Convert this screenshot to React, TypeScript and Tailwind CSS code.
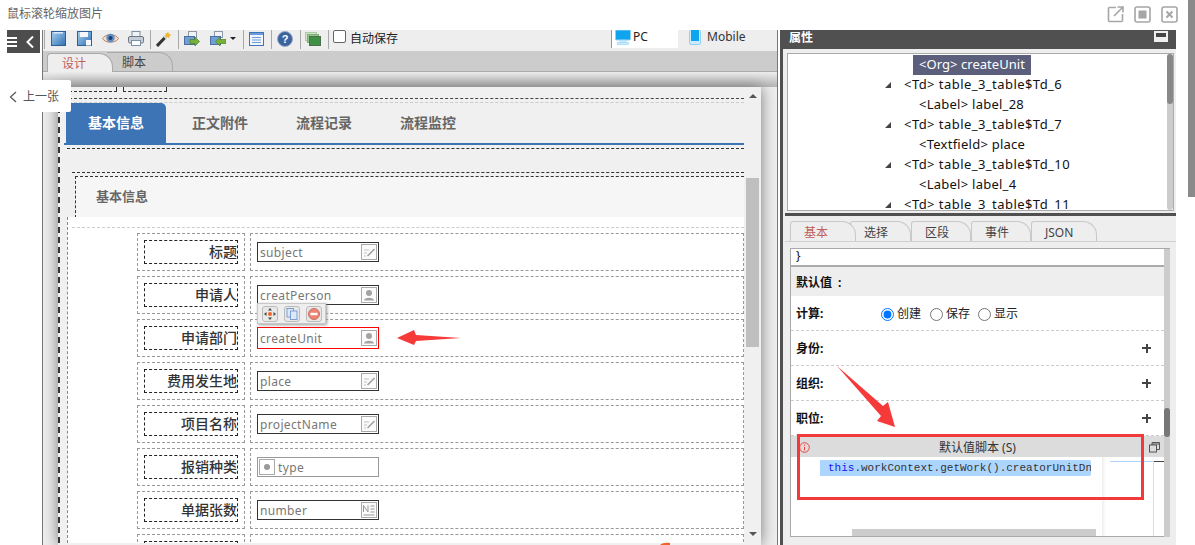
import React from "react";

const FONT = '"Noto Sans", "Noto Sans CJK SC", sans-serif';

function Sep() {
  return <span className="self-start w-px h-[19px] bg-[#a8a8a8] shrink-0" />;
}

function FloppyBlue({ sheet }: { sheet?: boolean }) {
  return (
    <svg width="15" height="15" viewBox="0 0 15 15">
      <defs>
        <linearGradient id="fb" x1="0" y1="0" x2="1" y2="1">
          <stop offset="0" stopColor="#a9d3f2" />
          <stop offset="1" stopColor="#2f6fb0" />
        </linearGradient>
      </defs>
      <rect x="0.5" y="0.5" width="14" height="14" fill="url(#fb)" stroke="#2a5f98" />
      {sheet ? (
        <>
          <rect x="3" y="1" width="8" height="5" fill="#f4f8fc" />
          <rect x="9" y="9" width="5" height="5.5" fill="#f4f8fc" />
        </>
      ) : (
        <rect x="3" y="1" width="9" height="1.5" fill="#dbeafa" />
      )}
    </svg>
  );
}

function Eye() {
  return (
    <svg width="17" height="13" viewBox="0 0 17 13">
      <path d="M0.5 6.5C3 1.5 14 1.5 16.5 6.5C14 11.5 3 11.5 0.5 6.5Z" fill="#f5dcc4" stroke="#b98a66" />
      <circle cx="8.5" cy="6" r="4.2" fill="#5d8fc9" />
      <circle cx="8.5" cy="6" r="2" fill="#1f3e72" />
    </svg>
  );
}

function Printer() {
  return (
    <svg width="16" height="15" viewBox="0 0 16 15">
      <rect x="4" y="0.5" width="8" height="6" fill="#eef3f8" stroke="#7f8fa3" />
      <rect x="0.5" y="5.5" width="15" height="6.5" rx="1.5" fill="#c4ccd6" stroke="#6c7683" />
      <rect x="3.5" y="9.5" width="9" height="5" fill="#fbfcfd" stroke="#7f8fa3" />
    </svg>
  );
}

function Wand() {
  return (
    <svg width="16" height="16" viewBox="0 0 16 16">
      <path d="M1 15L10 5.5" stroke="#333" strokeWidth="3" />
      <path d="M8.6 7L10 5.5" stroke="#ddd" strokeWidth="3" />
      <path d="M12 0.5L13 3L15.5 3.8L13.3 5.2L13.3 7.5L11.4 6L9.2 6.6L10 4.4L8.8 2.5L11 2.6Z" fill="#f0b428" />
    </svg>
  );
}

function ImportIcon({ left }: { left?: boolean }) {
  return (
    <svg width="16" height="16" viewBox="0 0 16 16">
      <rect x="4.5" y="0.5" width="8" height="6" fill="#f0f3f7" stroke="#8c97a6" />
      <rect x="0.5" y="5.5" width="10" height="8" fill="#6f9fd6" stroke="#4c6f9e" />
      {left ? (
        <path d="M16 8.5H10V6L5.5 10.5L10 15V12.5H16Z" fill="#74b23a" stroke="#4d7f22" strokeWidth="0.7" />
      ) : (
        <path d="M6 8.5H11V6L15.5 10.5L11 15V12.5H6Z" fill="#74b23a" stroke="#4d7f22" strokeWidth="0.7" />
      )}
    </svg>
  );
}

function ListIcon() {
  return (
    <svg width="15" height="14" viewBox="0 0 15 14">
      <rect x="0.5" y="0.5" width="14" height="13" fill="#f2f6fc" stroke="#3f74ba" />
      <rect x="1" y="1" width="13" height="2" fill="#6b9bd8" />
      <path d="M3 5.5H12M3 8H12M3 10.5H12" stroke="#6b9bd8" />
    </svg>
  );
}

function HelpIcon() {
  return (
    <svg width="16" height="16" viewBox="0 0 16 16">
      <circle cx="8" cy="8" r="7.5" fill="#3c62a0" stroke="#9aa9c2" />
      <text x="8" y="12" textAnchor="middle" fill="#fff" fontSize="11" fontWeight="700" fontFamily="Liberation Sans, sans-serif">?</text>
    </svg>
  );
}

function LayersIcon() {
  return (
    <svg width="16" height="14" viewBox="0 0 16 14">
      <rect x="0.5" y="0.5" width="11" height="8" fill="#cfe6c8" stroke="#a8cca0" />
      <rect x="2.5" y="2.5" width="11" height="8" fill="#94c48a" stroke="#7fae76" />
      <rect x="4.5" y="4.5" width="11" height="9" fill="#3f8f45" stroke="#4d6f50" />
    </svg>
  );
}

function Toolbar() {
  return (
    <div className="h-[21px] bg-[#eeeeee] flex items-start relative">
      <div className="flex items-center h-[17px] pl-[1px]">
        <Sep />
        <span className="ml-[6px] w-[26px]"><FloppyBlue /></span>
        <span className="w-[25px]"><FloppyBlue sheet /></span>
        <span className="w-[26px]"><Eye /></span>
        <span className="w-[22px]"><Printer /></span>
        <Sep />
        <span className="ml-[5px] w-[22px]"><Wand /></span>
        <Sep />
        <span className="ml-[5px] w-[26px]"><ImportIcon /></span>
        <span className="flex items-center w-[33px]">
          <ImportIcon left />
          <span className="ml-[4px] w-0 h-0 border-x-[3px] border-x-transparent border-t-[3px] border-t-[#222]" />
        </span>
        <Sep />
        <span className="ml-[5px] w-[22px]"><ListIcon /></span>
        <Sep />
        <span className="ml-[5px] w-[23px]"><HelpIcon /></span>
        <Sep />
        <span className="ml-[4px] w-[23px]"><LayersIcon /></span>
        <Sep />
        <input type="checkbox" readOnly className="ml-[4px] w-[13px] h-[13px] mt-[-4px] appearance-none border border-[#666] rounded-[2px] bg-white" />
        <span className="ml-[4px] text-[12px] leading-[17px] text-[#222]">自动保存</span>
      </div>
      <div className="ml-[213px] flex h-[18px]">
        <div className="w-[67px] bg-white border-l border-[#999] flex items-start pl-[3px]">
          <svg width="16" height="15" viewBox="0 0 16 15">
            <rect x="0.5" y="0" width="15" height="10" rx="1" fill="#0ea5ee" stroke="#8fd2f5" />
            <rect x="5" y="10" width="6" height="2.5" fill="#cdeafa" stroke="#8fd2f5" strokeWidth="0.6" />
            <rect x="2.5" y="12.5" width="11" height="2" fill="#cdeafa" stroke="#8fd2f5" strokeWidth="0.6" />
          </svg>
          <span className="ml-[2px] text-[12px] leading-[14px] text-[#222]">PC</span>
        </div>
        <div className="flex items-start pl-[11px]">
          <svg width="12" height="15" viewBox="0 0 12 15">
            <rect x="0.5" y="0" width="11" height="14.5" rx="1.5" fill="#cdeafa" stroke="#8fd2f5" />
            <rect x="2" y="0" width="8" height="11" fill="#0ea5ee" />
          </svg>
          <span className="ml-[6px] text-[12px] leading-[13px] text-[#333]">Mobile</span>
        </div>
      </div>
    </div>
  );
}

function PencilIcon() {
  return (
    <svg width="16" height="16" viewBox="0 0 16 16">
      <rect x="0.5" y="0.5" width="15" height="15" fill="#fbfbfb" stroke="#aaa" />
      <path d="M3 6H8M3 9H6M3 12H5" stroke="#c0c0c0" />
      <path d="M6.5 12L13.5 5" stroke="#a0a0a0" strokeWidth="1.6" />
    </svg>
  );
}

function PersonIcon() {
  return (
    <svg width="16" height="16" viewBox="0 0 16 16">
      <rect x="0.5" y="0.5" width="15" height="15" fill="#fbfbfb" stroke="#aaa" />
      <circle cx="8" cy="6" r="3" fill="#a3a3a3" />
      <path d="M3 13.5C3 9.8 13 9.8 13 13.5Z" fill="#a3a3a3" />
    </svg>
  );
}

function NumberIcon() {
  return (
    <svg width="16" height="16" viewBox="0 0 16 16">
      <rect x="0.5" y="0.5" width="15" height="15" fill="#fbfbfb" stroke="#aaa" />
      <path d="M2.5 10V3.5L7 10V3.5" stroke="#999" fill="none" />
      <path d="M9.5 4H13.5M9.5 7H13.5M9.5 10H13.5M2.5 13H13.5" stroke="#999" />
    </svg>
  );
}

function Field({ label, name, kind, selected }: { label: string; name: string; kind: "pen" | "person" | "num" | "radio"; selected?: boolean }) {
  const tall = selected ? "h-[22px] border-[#f00]" : kind === "radio" ? "h-[20px] border-[#999]" : "h-[20px] border-[#333]";
  return (
    <div className="flex h-[38px] mb-[5px] shrink-0">
      <div className="w-[108px] h-full border border-dashed border-[#999] px-[6px] flex items-center">
        <div className="w-full h-[24px] border border-dashed border-[#222] text-right text-[14px] leading-[22px] font-medium text-[#333]">{label}</div>
      </div>
      <div className="ml-[5px] flex-1 h-full border border-dashed border-[#999] pl-[6px] pt-[8px]">
        <div className={`w-[122px] ${tall} border flex items-center bg-white ${selected ? "-mt-[1px]" : ""}`}>
          {kind === "radio" && (
            <span className="ml-[1px] w-[16px] h-[16px] border border-[#aaa] flex items-center justify-center mr-[3px]">
              <span className="w-[6px] h-[6px] rounded-full bg-[#999]" />
            </span>
          )}
          <span className={`text-[12px] tracking-[0.35px] text-[#777] pt-[1px] ${kind === "radio" ? "" : "pl-[2px]"}`}>{name}</span>
          {kind !== "radio" && (
            <span className="ml-auto mr-[1px]">
              {kind === "pen" ? <PencilIcon /> : kind === "person" ? <PersonIcon /> : <NumberIcon />}
            </span>
          )}
        </div>
      </div>
    </div>
  );
}

function FloatTools() {
  const Btn = ({ children }: { children: React.ReactNode }) => (
    <span className="w-[16px] h-[16px] rounded-[3px] border border-[#bbb] bg-[#e8e8e8] flex items-center justify-center">{children}</span>
  );
  return (
    <div className="absolute left-[257px] top-[303px] w-[69px] h-[21px] bg-[#eeeeee] border border-[#c8c8c8] shadow-[1px_1px_3px_#999] flex items-center gap-[6px] pl-[4px]">
      <Btn>
        <svg width="12" height="12" viewBox="0 0 12 12">
          <path d="M6 0L8 2.5H4ZM6 12L4 9.5H8ZM0 6L2.5 4V8ZM12 6L9.5 8V4Z" fill="#444" />
          <circle cx="6" cy="6" r="2" fill="#f0642a" />
        </svg>
      </Btn>
      <Btn>
        <svg width="12" height="12" viewBox="0 0 12 12">
          <rect x="1" y="0.5" width="6.5" height="8.5" fill="#dce9fa" stroke="#7d9fd0" />
          <rect x="4.5" y="3" width="6.5" height="8.5" fill="#dce9fa" stroke="#7d9fd0" />
        </svg>
      </Btn>
      <Btn>
        <svg width="12" height="12" viewBox="0 0 12 12">
          <circle cx="6" cy="6" r="5.5" fill="#ec8576" stroke="#d0705f" />
          <rect x="2.5" y="4.8" width="7" height="2.4" fill="#fff" />
        </svg>
      </Btn>
    </div>
  );
}

function DesignPanel() {
  return (
    <div className="flex-1 min-h-0 bg-[#eeeeee] pt-[15px] pl-[15px] overflow-hidden relative">
      <div className="absolute left-0 right-0 top-0 h-[15px] bg-gradient-to-b from-[#eeeeee] to-[#b4b4b4]" />
      <div className="relative w-[703px] h-[458px] bg-[#f0f0f0] shadow-[0_0_14px_#777] flex">
        <div className="w-[686px] h-[456px] flex flex-col border-l-2 border-dashed border-[#333]">
          <div className="h-[11px] flex pl-[9px] items-start shrink-0">
            <span className="w-[48px] h-[5px] border-b border-r border-dashed border-[#333]" />
            <span className="ml-[6px] w-[44px] h-[5px] border-b border-r border-l border-dashed border-[#333]" />
          </div>
          <div className="ml-[4px] border-t border-dashed border-[#444] h-[5px] shrink-0">
            <div className="mt-[3px] border-t border-dashed border-[#ccc]" />
          </div>
          <div className="ml-[4px] h-[40px] flex items-stretch pl-[2px] shrink-0 text-[14px] font-bold text-[#666]">
            <div className="w-[100px] bg-[#3d74b5] text-white rounded-tr-[5px] flex items-center justify-center pb-[2px]">基本信息</div>
            <div className="flex items-center pl-[26px] gap-[48px] pb-[2px]">
              <span>正文附件</span>
              <span>流程记录</span>
              <span>流程监控</span>
            </div>
          </div>
          <div className="ml-[4px] h-[2px] bg-[#3d74b5] shrink-0" />
          <div className="ml-[7px] mt-[3px] h-[24px] border-t border-dashed border-[#333] shrink-0" />
          <div className="ml-[12px] h-[45px] border-t border-dashed border-[#333] pt-[3px] shrink-0">
            <div className="ml-[3px] h-[42px] bg-[#f6f6f6] border-t border-l border-b border-dashed border-[#333] flex items-center pl-[20px] text-[13px] font-bold text-[#666]">
              基本信息
            </div>
          </div>
          <div className="ml-[7px] flex-1 min-h-0 overflow-hidden bg-white border-l border-dashed border-[#888]">
            <div className="ml-[4px] h-full pt-[10px] overflow-hidden">
              <div className="border-t border-dashed border-[#ccc] pt-[5px] pl-[65px] flex flex-col">
                <Field label="标题" name="subject" kind="pen" />
                <Field label="申请人" name="creatPerson" kind="person" />
                <Field label="申请部门" name="createUnit" kind="person" selected />
                <Field label="费用发生地" name="place" kind="pen" />
                <Field label="项目名称" name="projectName" kind="pen" />
                <Field label="报销种类" name="type" kind="radio" />
                <Field label="单据张数" name="number" kind="num" />
                <Field label="" name="" kind="radio" />
              </div>
            </div>
          </div>
        </div>
        <div className="ml-[2px] w-[13px] h-[456px] flex flex-col items-center">
          <span className="mt-[7px] w-0 h-0 border-x-[4px] border-x-transparent border-b-[4px] border-b-[#555]" />
          <div className="mt-[80px] w-[13px] h-[169px] bg-[#bfbfbf]" />
          <span className="mt-[185px] w-0 h-0 border-x-[4px] border-x-transparent border-t-[4px] border-t-[#555]" />
        </div>
      </div>
    </div>
  );
}

const treeRows: { text: string; level: number; sel?: boolean }[] = [
  { text: "<Org> createUnit", level: 2, sel: true },
  { text: "<Td> table_3_table$Td_6", level: 1 },
  { text: "<Label> label_28", level: 2 },
  { text: "<Td> table_3_table$Td_7", level: 1 },
  { text: "<Textfield> place", level: 2 },
  { text: "<Td> table_3_table$Td_10", level: 1 },
  { text: "<Label> label_4", level: 2 },
  { text: "<Td> table_3_table$Td_11", level: 1 },
];

function TreeBox() {
  return (
    <div className="mt-[4px] ml-[4px] w-[387px] h-[158px] border border-[#aaaaaa] bg-white flex overflow-hidden">
      <div className="flex-1 pt-[1px] text-[13px] text-[#111] overflow-hidden">
        {treeRows.map((r) => (
          <div key={r.text} className="h-[20px] flex items-center shrink-0">
            {r.level === 1 ? (
              <>
                <svg className="ml-[97px] mr-[13px]" width="6" height="6" viewBox="0 0 6 6">
                  <path d="M6 0V6H0Z" fill="#444" />
                </svg>
                <span className="whitespace-nowrap tracking-[0.45px]">{r.text}</span>
              </>
            ) : r.sel ? (
              <span className="ml-[125px] h-[20px] w-[118px] pl-[6px] bg-[#5c5f7c] text-white flex items-center whitespace-nowrap tracking-[0.05px]">{r.text}</span>
            ) : (
              <span className="ml-[131px] whitespace-nowrap tracking-[0.25px]">{r.text}</span>
            )}
          </div>
        ))}
      </div>
      <div className="w-[6px] mr-[0px] bg-[#cccccc] rounded-[3px]">
        <div className="h-[50px] bg-[#888888] rounded-[3px]" />
      </div>
    </div>
  );
}

function PropTabs() {
  const tabs = [
    { t: "基本", w: "w-[66px]", on: true, pl: "pl-[13px]" },
    { t: "选择", w: "w-[61px]", pl: "pl-[13px]" },
    { t: "区段", w: "w-[60px]", pl: "pl-[13px]" },
    { t: "事件", w: "w-[60px]", pl: "pl-[13px]" },
    { t: "JSON", w: "w-[66px]", pl: "pl-[13px]" },
  ];
  return (
    <div className="mt-[5px] ml-[2px] mr-[0px] h-[21px] flex pl-[5px] border-b border-[#d0d0d0]">
      {tabs.map((x, i) => (
        <div
          key={x.t}
          style={{ marginLeft: i === 1 ? -6 : 0 }}
          className={`${x.w} ${x.pl} h-[20px] border-t border-r border-l border-[#c8c8c8] rounded-tr-[14px] rounded-tl-[3px] text-[12px] leading-[21px] ${x.on ? "text-[#c0605a] bg-[#eeeeee] z-10" : "text-[#444] bg-[#eeeeee]"}`}
        >
          {x.t}
        </div>
      ))}
    </div>
  );
}

function PlusRow({ label }: { label: string }) {
  return (
    <div className="h-[35px] bg-white border-b border-dashed border-[#cccccc] flex items-center pl-[5px] pr-[13px] pt-[2px] justify-between">
      <span className="text-[12px] font-bold text-[#111]">{label}</span>
      <span className="relative w-[9px] h-[9px] -mt-[2px]">
        <span className="absolute left-0 right-0 top-[3.5px] h-[2px] bg-[#444]" />
        <span className="absolute top-0 bottom-0 left-[3.5px] w-[2px] bg-[#444]" />
      </span>
    </div>
  );
}

function PropForm() {
  return (
    <div className="mt-[6px] ml-[7px] w-[380px] flex-1 min-h-0 flex flex-col">
      <div className="flex h-[289px] border-t border-[#aaaaaa]">
        <div className="flex-1 min-w-0 border-l border-[#aaaaaa] flex flex-col">
          <div className="h-[18px] border-b-2 border-[#aaaaaa] pl-[5px] text-[12px] leading-[14px] text-[#111] bg-white">{"}"}</div>
          <div className="h-[28px] mt-[1px] bg-[#eeeeee] flex items-center pl-[5px] pt-[2px] text-[12px] font-bold text-[#111]">
            默认值<span className="ml-[6px]">:</span>
          </div>
          <div className="h-[35px] border-b border-dashed border-[#cccccc] flex items-center pl-[5px] pt-[2px] bg-white">
            <span className="w-[85px] text-[12px] font-bold text-[#111]">计算:</span>
            <label className="flex items-center text-[12px] text-[#222]">
              <input type="radio" name="calc" defaultChecked className="w-[13px] h-[13px] m-0" />
              <span className="ml-[3px] mr-[9px]">创建</span>
            </label>
            <label className="flex items-center text-[12px] text-[#222]">
              <input type="radio" name="calc" className="w-[13px] h-[13px] m-0" />
              <span className="ml-[3px] mr-[8px]">保存</span>
            </label>
            <label className="flex items-center text-[12px] text-[#222]">
              <input type="radio" name="calc" className="w-[13px] h-[13px] m-0" />
              <span className="ml-[3px]">显示</span>
            </label>
          </div>
          <PlusRow label="身份:" />
          <PlusRow label="组织:" />
          <PlusRow label="职位:" />
          <div className="h-[21px] bg-[#dcdcdc] flex items-center relative shrink-0 pt-[2px]">
            <svg className="ml-[8px]" width="11" height="11" viewBox="0 0 11 11">
              <circle cx="5.5" cy="5.5" r="4.8" fill="none" stroke="#e44" />
              <path d="M5.5 2.5V3.7M5.5 4.8V8.5" stroke="#e44" />
            </svg>
            <span className="absolute left-[148px] text-[12px] text-[#333]">默认值脚本 (S)</span>
            <svg className="ml-auto mr-[4px]" width="11" height="11" viewBox="0 0 11 11">
              <rect x="0.5" y="3" width="7" height="7" fill="none" stroke="#555" />
              <path d="M3 3V0.5H10.5V7.5H7.5M3 2H10.5" fill="none" stroke="#555" />
            </svg>
          </div>
          <div className="flex-1 bg-white relative overflow-hidden">
            <div className="ml-[29px] mt-[3px] w-[271px] h-[16px] bg-[#add6ff] rounded-r-[2px] pl-[8px] whitespace-nowrap overflow-hidden font-['Liberation_Mono',monospace] text-[11px] leading-[17px] text-[#333]">
              <span className="text-[#1a1aee]">this</span>.workContext.getWork().creatorUnitDn
            </div>
            <div className="absolute left-[311px] top-0 bottom-0 w-[4px] bg-gradient-to-r from-[#eeeeee] to-white" />
            <div className="absolute left-[319px] top-[4px] w-[44px] h-px bg-[#add6ff]" />
            <div className="absolute left-[363px] top-[4px] w-[10px] h-px bg-[#444]" />
            <div className="absolute left-[362px] top-[4px] bottom-0 w-px bg-[#ddd]" />
            <div className="absolute left-[61px] bottom-0 w-[244px] h-[7px] bg-[#cccccc]" />
          </div>
          <div className="h-px bg-[#aaaaaa] shrink-0" />
        </div>
        <div className="w-[6px] h-full bg-[#cccccc] relative shrink-0">
          <div className="mt-[159px] h-[29px] bg-[#777777] rounded-[3px]" />
        </div>
      </div>
    </div>
  );
}

export default function App() {
  return (
    <div className="w-[1195px] h-[545px] relative overflow-hidden bg-white flex" style={{ fontFamily: FONT }}>
      <div className="w-[1188px] h-full flex flex-col">
        <div className="h-[30px] shrink-0 flex items-center pl-[7px] pr-[10px] pb-[3px]">
          <span className="text-[12px] text-[#666]">鼠标滚轮缩放图片</span>
          <div className="ml-auto flex items-center gap-[10px] pt-[1px]">
            <svg width="17" height="17" viewBox="0 0 17 17" fill="none" stroke="#a6a6a6" strokeWidth="1.6">
              <path d="M9 1.5H2.5A1 1 0 0 0 1.5 2.5V14.5A1 1 0 0 0 2.5 15.5H14.5A1 1 0 0 0 15.5 14.5V8" />
              <path d="M7 10L15.5 1.5M10.5 1H16V6.5" />
            </svg>
            <svg width="17" height="17" viewBox="0 0 17 17" fill="none" stroke="#a6a6a6" strokeWidth="1.6">
              <rect x="1" y="1" width="15" height="15" rx="2" />
              <rect x="4.5" y="4.5" width="8" height="8" fill="#a6a6a6" stroke="none" />
            </svg>
            <svg width="17" height="17" viewBox="0 0 17 17" fill="none" stroke="#a6a6a6" strokeWidth="1.6">
              <rect x="1" y="1" width="15" height="15" rx="2" />
              <path d="M5.5 5.5L11.5 11.5M11.5 5.5L5.5 11.5" strokeWidth="2" />
            </svg>
          </div>
        </div>
        <div className="flex-1 min-h-0 flex">
          <div className="w-[42px] shrink-0 pl-[7px]">
            <div className="w-[33px] h-[23px] bg-[#4d4d4d] flex items-center">
              <span className="w-[10px] flex flex-col gap-[2px]">
                <span className="h-[2px] bg-white" />
                <span className="h-[2px] bg-white" />
                <span className="h-[2px] bg-white" />
              </span>
              <svg className="ml-[9px]" width="8" height="12" viewBox="0 0 8 12" fill="none" stroke="#fff" strokeWidth="2">
                <path d="M7 0.5L1.5 6L7 11.5" />
              </svg>
            </div>
          </div>
          <div className="w-[736px] shrink-0 flex flex-col border-l border-r border-[#777]">
            <Toolbar />
            <div className="h-[21px] bg-[#cccccc] border-b border-[#aaaaaa] flex pl-[4px] items-end shrink-0">
              <div className="w-[66px] h-[19px] bg-[#eeeeee] border-t border-l border-r border-[#aaa] rounded-tr-[14px] rounded-tl-[4px] pl-[14px] text-[12px] leading-[19px] text-[#c0605a] z-10 -mb-px">设计</div>
              <div className="w-[66px] -ml-[6px] h-[19px] border-t border-r border-[#aaa] rounded-tr-[14px] pl-[15px] text-[12px] leading-[19px] text-[#444]">脚本</div>
            </div>
            <DesignPanel />
          </div>
          <div className="w-[2px] shrink-0" />
          <div className="w-[396px] shrink-0 bg-[#eeeeee] border-l-[3px] border-[#505050] flex flex-col relative">
            <div className="h-[19px] -ml-[3px] bg-[#505050] flex items-center pl-[9px] pr-[8px] pb-[4px] shrink-0 text-[12px] font-bold text-white">
              <span>属性</span>
              <span className="ml-auto w-[14px] h-[11px] bg-[#eeeeee] flex items-start justify-center -mt-[2px] pt-[2px]">
                <span className="w-[10px] h-[4px] bg-[#444]" />
              </span>
            </div>
            <TreeBox />
            <div className="mt-[2px] h-[3px] bg-[#505050] shrink-0 ml-[2px]" />
            <PropTabs />
            <PropForm />
          </div>
        </div>
      </div>
      <div className="w-[7px] h-full bg-white">
        <div className="h-[197px] bg-[#8a8a8a]" />
      </div>

      <div className="absolute left-0 top-[80px] w-[71px] h-[32px] bg-white rounded-r-[2px] flex items-center pl-[9px] pt-[1px] text-[12px] text-[#555]">
        <svg width="8" height="12" viewBox="0 0 8 12" fill="none" stroke="#555" strokeWidth="1.2">
          <path d="M7 1L1.5 6L7 11" />
        </svg>
        <span className="ml-[6px]">上一张</span>
      </div>

      <FloatTools />

      <svg className="absolute left-0 top-0 pointer-events-none" width="1195" height="545" viewBox="0 0 1195 545">
        <polygon points="397,338 414,330 416,335 461,338 416,341 414,345" fill="#f63a3a" />
        <polygon points="837,366 883,406 888,402 895,427 877,421 881,416" fill="#f63a3a" />
        <path d="M660 545C662 543 666 542.5 670 543V545Z" fill="#f0642a" />
      </svg>
      <div className="absolute left-[797px] top-[434px] w-[347px] h-[66px] border-[3px] border-[#f33a3a] pointer-events-none" />
    </div>
  );
}
